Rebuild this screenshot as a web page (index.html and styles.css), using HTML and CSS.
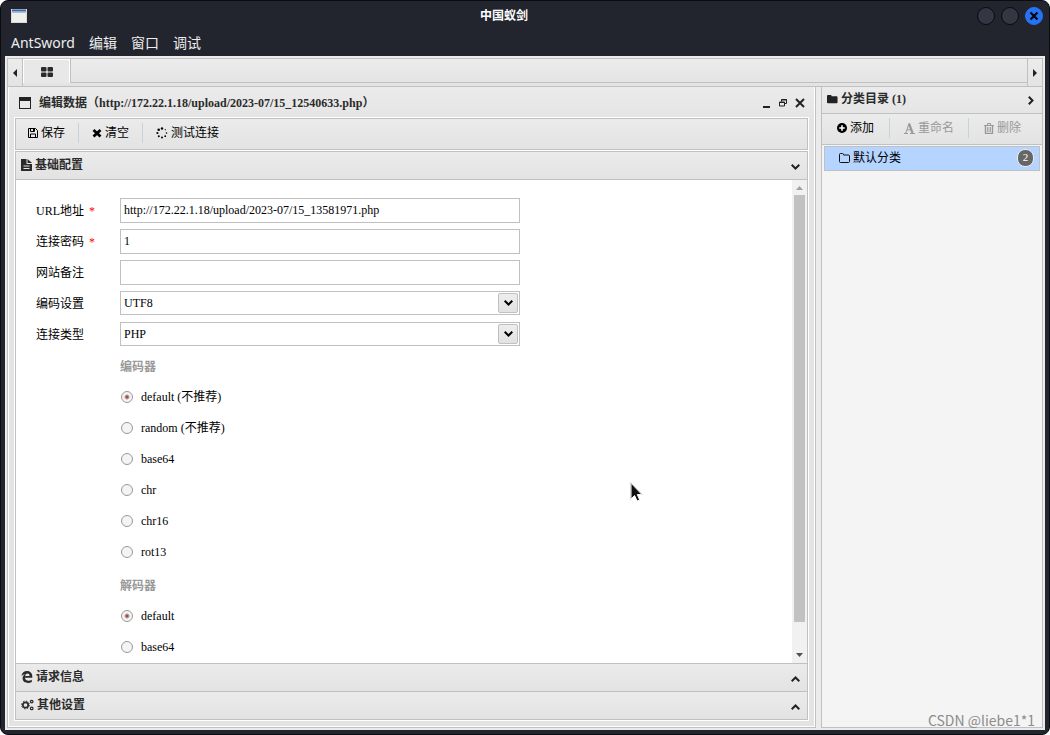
FILE: index.html
```html
<!DOCTYPE html>
<html lang="zh-CN">
<head>
<meta charset="utf-8">
<title>中国蚁剑</title>
<link rel="stylesheet" href="styles.css">
</head>
<body>
<div class="window">
  <header class="titlebar">
    <svg class="app-icon" width="16" height="14" viewBox="0 0 16 14"><rect x=".5" y=".5" width="15" height="13" fill="#f0f0ea" stroke="#d8dade"/><path d="M1 1.5h14" stroke="#3f69a8" stroke-width="2"/><path d="M1 3.5h14" stroke="#a9bcd8"/></svg>
    <h1 class="titlebar-text">中国蚁剑</h1>
    <div class="titlebar-buttons">
      <button class="round" aria-label="最小化"></button>
      <button class="round" aria-label="最大化"></button>
      <button class="round round-close" aria-label="关闭"><svg width="10" height="10" viewBox="0 0 10 10"><path d="M1.5 1.5l7 7M8.5 1.5l-7 7" stroke="#06080f" stroke-width="2.2"/></svg></button>
    </div>
  </header>
  <nav class="menubar">
    <button>AntSword</button><button>编辑</button><button>窗口</button><button>调试</button>
  </nav>

  <div class="app">
    <div class="tabbar">
      <button class="tab-arrow" aria-label="向左"><svg width="6" height="8" viewBox="0 0 6 8"><path d="M5 0v8L1 4z" fill="#222"/></svg></button>
      <button class="tab" aria-label="主页"><svg width="12" height="10" viewBox="0 0 12 10" fill="#2b2b2b"><rect width="5.5" height="4.5" rx="1"/><rect x="6.5" width="5.5" height="4.5" rx="1"/><rect y="5.5" width="5.5" height="4.5" rx="1"/><rect x="6.5" y="5.5" width="5.5" height="4.5" rx="1"/></svg></button>
      <div class="tab-space"></div>
      <button class="tab-arrow tab-arrow-right" aria-label="向右"><svg width="6" height="8" viewBox="0 0 6 8"><path d="M1 0v8l4-4z" fill="#222"/></svg></button>
    </div>

    <div class="body">
      <main class="editor">
        <div class="editor-title">
          <svg width="12" height="12" viewBox="0 0 12 12"><rect x=".5" y=".5" width="11" height="11" fill="none" stroke="#222"/><path d="M0 2h12" stroke="#222" stroke-width="4"/></svg>
          <h2>编辑数据（http://172.22.1.18/upload/2023-07/15_12540633.php）</h2>
          <div class="editor-buttons">
            <button aria-label="最小化"><svg width="8" height="10" viewBox="0 0 8 10"><path d="M0 9h7" stroke="#222" stroke-width="2"/></svg></button>
            <button aria-label="还原"><svg width="8" height="10" viewBox="0 0 8 10" fill="none" stroke="#222"><path d="M2.5 3.500V1.500h5v4h-2M2 2h6"/><path d="M.5 4h5v4h-5z"/><path d="M0 4.500h6"/></svg></button>
            <button aria-label="关闭"><svg width="10" height="10" viewBox="0 0 10 10"><path d="M1 1l8 8M9 1L1 9" stroke="#222" stroke-width="2"/></svg></button>
          </div>
        </div>

        <div class="panel toolbar">
          <button><svg width="10" height="10" viewBox="0 0 10 10" fill="none" stroke="#000"><path d="M.5.500h7l2 2v7h-9zM2.500.500v3h4v-3M2.500 9.500V6h5v3.500"/><path d="M5.500 1v2"/></svg>保存</button>
          <span class="divider"></span>
          <button><svg width="10" height="10" viewBox="0 0 10 10"><path d="M1.500 2l7 6.500M8.500 2l-7 6.500" stroke="#000" stroke-width="2.800"/></svg>清空</button>
          <span class="divider"></span>
          <button><svg width="12" height="12" viewBox="0 0 12 12"><circle cx="6" cy="1.500" r="1.200"/><circle cx="9.300" cy="2.700" r=".6"/><circle cx="10.500" cy="6" r=".8"/><circle cx="9.200" cy="9.200" r=".9"/><circle cx="6" cy="10.600" r="1"/><circle cx="2.800" cy="9.200" r="1"/><circle cx="1.400" cy="6" r="1.100"/><circle cx="2.700" cy="2.700" r="1.300"/></svg>测试连接</button>
        </div>

        <div class="panel accordion">
          <button class="section-head">
            <svg width="11" height="12" viewBox="0 0 11 12"><path d="M0 0h5.500v5H11v7H0z" fill="#2b2b2b"/><path d="M6.500 0L11 4H6.500z" fill="#2b2b2b"/><path d="M2.500 7h6M2.500 9.500h6" stroke="#e8e8e8"/></svg>
            <span>基础配置</span>
            <svg class="chevron" width="9" height="6" viewBox="0 0 9 6"><path d="M.7.800l3.800 3.700L8.300.800" fill="none" stroke="#222" stroke-width="2"/></svg>
          </button>
          <div class="section-body">
            <form class="form">
              <div class="row"><label for="url">URL地址<b class="req">*</b></label><input id="url" type="text" value="http://172.22.1.18/upload/2023-07/15_13581971.php"></div>
              <div class="row"><label for="pwd">连接密码<b class="req">*</b></label><input id="pwd" type="text" value="1"></div>
              <div class="row"><label for="note">网站备注</label><input id="note" type="text"></div>
              <div class="row"><label for="enc">编码设置</label><span class="combo"><select id="enc"><option>UTF8</option></select><span class="combo-btn"><svg width="9" height="6" viewBox="0 0 9 6"><path d="M.7.800l3.800 3.700L8.300.800" fill="none" stroke="#000" stroke-width="2"/></svg></span></span></div>
              <div class="row"><label for="type">连接类型</label><span class="combo"><select id="type"><option>PHP</option></select><span class="combo-btn"><svg width="9" height="6" viewBox="0 0 9 6"><path d="M.7.800l3.800 3.700L8.300.800" fill="none" stroke="#000" stroke-width="2"/></svg></span></span></div>
              <fieldset class="group">
                <legend>编码器</legend>
                <label class="radio"><input type="radio" name="encoder" checked>default (不推荐)</label>
                <label class="radio"><input type="radio" name="encoder">random (不推荐)</label>
                <label class="radio"><input type="radio" name="encoder">base64</label>
                <label class="radio"><input type="radio" name="encoder">chr</label>
                <label class="radio"><input type="radio" name="encoder">chr16</label>
                <label class="radio"><input type="radio" name="encoder">rot13</label>
              </fieldset>
              <fieldset class="group">
                <legend>解码器</legend>
                <label class="radio"><input type="radio" name="decoder" checked>default</label>
                <label class="radio"><input type="radio" name="decoder">base64</label>
              </fieldset>
            </form>
            <div class="scrollbar">
              <svg width="7" height="4" viewBox="0 0 7 4"><path d="M0 4l3.500-4L7 4z" fill="#a0a0a0"/></svg>
              <div class="thumb"></div>
              <svg width="7" height="4" viewBox="0 0 7 4"><path d="M0 0l3.500 4L7 0z" fill="#505050"/></svg>
            </div>
          </div>
          <button class="section-head">
            <svg width="12" height="12" viewBox="0 0 12 12"><path d="M.3 5.400C.8 1.800 3.200 0 6 0c3.600 0 5.300 2.600 5.300 5.300v1.500H4c.1 2 1.600 2.900 3.500 2.900 1.200 0 2.300-.3 3.300-.9v2.300c-1 .6-2.300.9-3.800.9-3.300 0-5.400-1.800-5.400-4.700 0-1.800.9-3.200 2.400-4C2.300 3.500 1.100 4.200.3 5.400zM4.200 4.900h4.300c0-1.500-.7-2.300-2-2.300S4.400 3.500 4.200 4.900z" fill="#2b2b2b" fill-rule="evenodd"/></svg>
            <span>请求信息</span>
            <svg class="chevron" width="9" height="6" viewBox="0 0 9 6"><path d="M.7 5.200l3.800-3.700 3.800 3.700" fill="none" stroke="#222" stroke-width="2"/></svg>
          </button>
          <button class="section-head">
            <svg width="13" height="12" viewBox="0 0 13 12" fill="none" stroke="#2b2b2b"><circle cx="4.500" cy="6" r="2.700" stroke-width="1.700"/><circle cx="4.500" cy="6" r="3.900" stroke-width="1" stroke-dasharray="1.500 1.560"/><circle cx="10.700" cy="2.600" r="1.300" stroke-width="1.200"/><circle cx="10.700" cy="9.400" r="1.300" stroke-width="1.200"/></svg>
            <span>其他设置</span>
            <svg class="chevron" width="9" height="6" viewBox="0 0 9 6"><path d="M.7 5.200l3.800-3.700 3.800 3.700" fill="none" stroke="#222" stroke-width="2"/></svg>
          </button>
        </div>
      </main>

      <aside class="sidebar">
        <div class="side-title">
          <svg width="11" height="10" viewBox="0 0 12 10"><path d="M0 1.500Q0 .5 1 .5h3q1 0 1 1V2h5.500q1 0 1 1v5.500q0 1-1 1H1q-1 0-1-1z" fill="#222"/></svg>
          <h2>分类目录 (1)</h2>
          <svg class="chevron" width="6" height="9" viewBox="0 0 6 9"><path d="M.8.700l3.700 3.800L.8 8.300" fill="none" stroke="#222" stroke-width="2"/></svg>
        </div>
        <div class="side-tools">
          <button><svg width="10" height="10" viewBox="0 0 10 10"><circle cx="5" cy="5" r="5"/><path d="M5 2.200v5.600M2.200 5h5.600" stroke="#fff" stroke-width="1.600"/></svg>添加</button>
          <span class="divider"></span>
          <button disabled><svg width="11" height="11" viewBox="0 0 11 11" fill="none" stroke="#999"><path d="M5 .500l3.500 9.500" stroke-width="2.200"/><path d="M5 .500L1.800 10M3 6.800h4M0 10.500h4M6 10.500h5"/></svg>重命名</button>
          <span class="divider"></span>
          <button disabled><svg width="10" height="11" viewBox="0 0 10 11" fill="none" stroke="#999"><path d="M0 2.500h10M3.500 2V.5h3V2"/><path d="M1.500 2.500v8h7v-8" stroke-width="1.400"/><path d="M3.500 4v5M5 4v5M6.500 4v5" stroke-width=".8"/></svg>删除</button>
        </div>
        <a class="tree-item" href="#">
          <svg width="11" height="10" viewBox="0 0 11 10"><path d="M.5 1.500Q.5.500 1.500.500h2q1 0 1 1V2h5q1 0 1 1v5.500q0 1-1 1h-8q-1 0-1-1z" fill="none" stroke="#111"/></svg>
          <span>默认分类</span>
          <span class="count">2</span>
        </a>
      </aside>
    </div>
  </div>
  <div class="watermark">CSDN @liebe1*1</div>
  <svg class="cursor" width="13" height="21" viewBox="0 0 13 21"><path d="M1 1v16l3.600-3.400 2.500 5.500 2.600-1.200-2.400-5.300H12z" fill="#111" stroke="#fff"/><path d="M.5.500v17M.5.500l12 12.500" stroke="#bbb" stroke-width=".6"/></svg>
</div>
</body>
</html>
```
FILE: styles.css
```css
* { box-sizing: border-box; }
html, body { height: 100%; }
body {
  margin: 0;
  background: #fff;
  overflow: hidden;
  color: #000;
  font: 12px/16px "Liberation Serif", "Noto Sans CJK SC", serif;
}
button, input, select { font: inherit; color: inherit; }
button { border: 0; padding: 0; background: none; display: flex; align-items: center; }
svg { display: block; flex: none; }
h1, h2 { margin: 0; font-size: 12px; }

.window {
  position: relative;
  height: 100vh;
  display: flex;
  flex-direction: column;
  padding: 0 4px 4px;
  border: 1px solid #0b0c11;
  border-radius: 8px;
  background: #23252e;
}
.titlebar { display: flex; align-items: center; height: 30px; padding: 0 2px 0 6px; color: #fff; }
.titlebar-text { flex: 1; padding-left: 4px; text-align: center; font-family: "Noto Sans", "Noto Sans CJK SC", sans-serif; }
.titlebar-buttons { display: flex; gap: 6px; }
.round {
  width: 18px;
  height: 18px;
  justify-content: center;
  border: 1px solid #08090c;
  border-radius: 50%;
  background: #343743;
}
.round-close { background: #2673f5; border-color: #2673f5; }
.menubar {
  display: flex;
  gap: 14px;
  height: 25px;
  padding: 0 6px 2px;
  color: #eee;
  font: 14px/20px "Noto Sans", "Noto Sans CJK SC", sans-serif;
}

.app {
  flex: 1;
  min-height: 0;
  display: flex;
  flex-direction: column;
  padding: 2px;
  background: #ebebeb;
}
.tabbar {
  display: flex;
  height: 29px;
  border: 1px solid #c0c0c0;
  background: linear-gradient(#ececec, #e3e3e3);
}
.tab-arrow { width: 15px; justify-content: center; border-right: 1px solid #c0c0c0; }
.tab-arrow-right { border-right: 0; border-left: 1px solid #c0c0c0; }
.tab {
  width: 47px;
  height: 24px;
  justify-content: center;
  border: 1px solid #fff;
  border-bottom: 0;
  background: #e8e8e8;
}
.tab-space { flex: 1; height: 24px; border-left: 1px solid #c0c0c0; border-bottom: 1px solid #c0c0c0; }

.body { flex: 1; min-height: 0; display: flex; gap: 5px; }
.editor {
  flex: 1;
  min-width: 0;
  display: flex;
  flex-direction: column;
  gap: 1px;
  padding: 0 6px 7px;
  border: 1px solid #c0c0c0;
  border-top: 0;
  box-shadow: inset 1px 0 #fff, inset -1px -1px #fff;
  background: linear-gradient(#ebebeb, #e3e3e3 40px);
}
.editor-title { display: flex; align-items: center; height: 30px; padding: 1px 4px 0 5px; }
.editor-title h2 { flex: 1; margin-left: 8px; color: #2b2b2b; }
.editor-buttons { display: flex; gap: 8px; }
.panel { border: 1px solid #c0c0c0; outline: 1px solid #fff; margin: 0 1px; background: #e8e8e8; }
.toolbar, .side-tools { display: flex; align-items: center; background: linear-gradient(#ebebeb, #e3e3e3); }
.toolbar { height: 32px; padding: 0 12px 2px; gap: 13px; }
.toolbar button { gap: 3px; }
.divider { width: 1px; height: 20px; background: #c3d5da; }

.accordion { flex: 1; min-height: 0; display: flex; flex-direction: column; }
.section-head {
  height: 28px;
  flex: none;
  gap: 3px;
  padding: 0 7px 2px 5px;
  border-top: 1px solid #c0c0c0;
  background: linear-gradient(#ebebeb, #e3e3e3);
  color: #2b2b2b;
  font-weight: bold;
}
.section-head:first-child { height: 27px; border-top: 0; }
.chevron { margin-left: auto; margin-top: 4px; }
.section-body {
  flex: 1;
  min-height: 0;
  display: flex;
  overflow: hidden;
  border-top: 1px solid #c0c0c0;
  background: #fff;
}
.form { flex: 1; padding: 18px 20px 0; overflow: hidden; }
.row { display: grid; grid-template-columns: 84px minmax(0, 400px); height: 31px; }
.row label { line-height: 26px; }
.req { margin-left: 5px; color: #f00; font-weight: normal; }
.row input, .row select {
  width: 100%;
  height: 25px;
  padding: 0 3px;
  border: 1px solid #c0c0c0;
  border-radius: 0;
  background: #fff;
  appearance: none;
}
.combo { position: relative; height: 24px; }
.row select { height: 24px; }
.combo-btn {
  position: absolute;
  top: 2px;
  right: 2px;
  width: 20px;
  height: 20px;
  display: grid;
  place-items: center;
  border: 1px solid #c0c0c0;
  border-radius: 2px;
  background: linear-gradient(#ededed, #e2e2e2);
  pointer-events: none;
}
.group { margin: 0 0 0 84px; padding: 0; border: 0; }
.group + .group { margin-top: 5px; }
.group legend { padding: 6px 0; color: #999; font-weight: bold; }
.radio { display: flex; align-items: center; gap: 8px; height: 31px; }
.radio input {
  appearance: none;
  width: 12px;
  height: 12px;
  margin: 0 0 0 1px;
  border: 1px solid #999;
  border-radius: 50%;
  background: #f4f4f4;
}
.radio input:checked { background: radial-gradient(circle, #955 0 1px, #f4f4f4 3px); }

.scrollbar {
  display: flex;
  flex-direction: column;
  align-items: center;
  gap: 5px;
  width: 15px;
  padding: 6px 2px;
  background: #f1f1f1;
}
.thumb { flex: 1; width: 11px; margin-bottom: 26px; background: #c1c1c1; }

.sidebar {
  width: 222px;
  border: 1px solid #c0c0c0;
  border-top: 0;
  background: #f4f4f4;
}
.side-title {
  display: flex;
  align-items: center;
  gap: 3px;
  height: 27px;
  padding: 0 8px 3px 5px;
  border-bottom: 1px solid #c0c0c0;
  background: linear-gradient(#ebebeb, #e5e5e5);
  color: #2b2b2b;
}
.side-tools { height: 31px; padding: 0 21px 2px 15px; justify-content: space-between; border-bottom: 1px solid #c0c0c0; }
.side-tools button { gap: 3px; }
.side-tools button:disabled { color: #999; }
.tree-item {
  display: flex;
  align-items: center;
  gap: 3px;
  height: 25px;
  margin: 1px 2px;
  padding: 0 5px 1px 14px;
  border: 1px solid #c0c0c0;
  background: #b5d4ff;
  color: #000;
  text-decoration: none;
}
.count {
  width: 17px;
  height: 18px;
  margin-left: auto;
  border: 1px solid #eee;
  border-radius: 8px;
  background: #666;
  color: #fff;
  font-size: 11px;
  line-height: 15px;
  text-align: center;
}
.watermark {
  position: absolute;
  right: 14px;
  bottom: 6px;
  color: #8c8c8c;
  font: 14px/16px "Noto Sans CJK SC", sans-serif;
}
.cursor { position: absolute; left: 629px; top: 481px; }
```
